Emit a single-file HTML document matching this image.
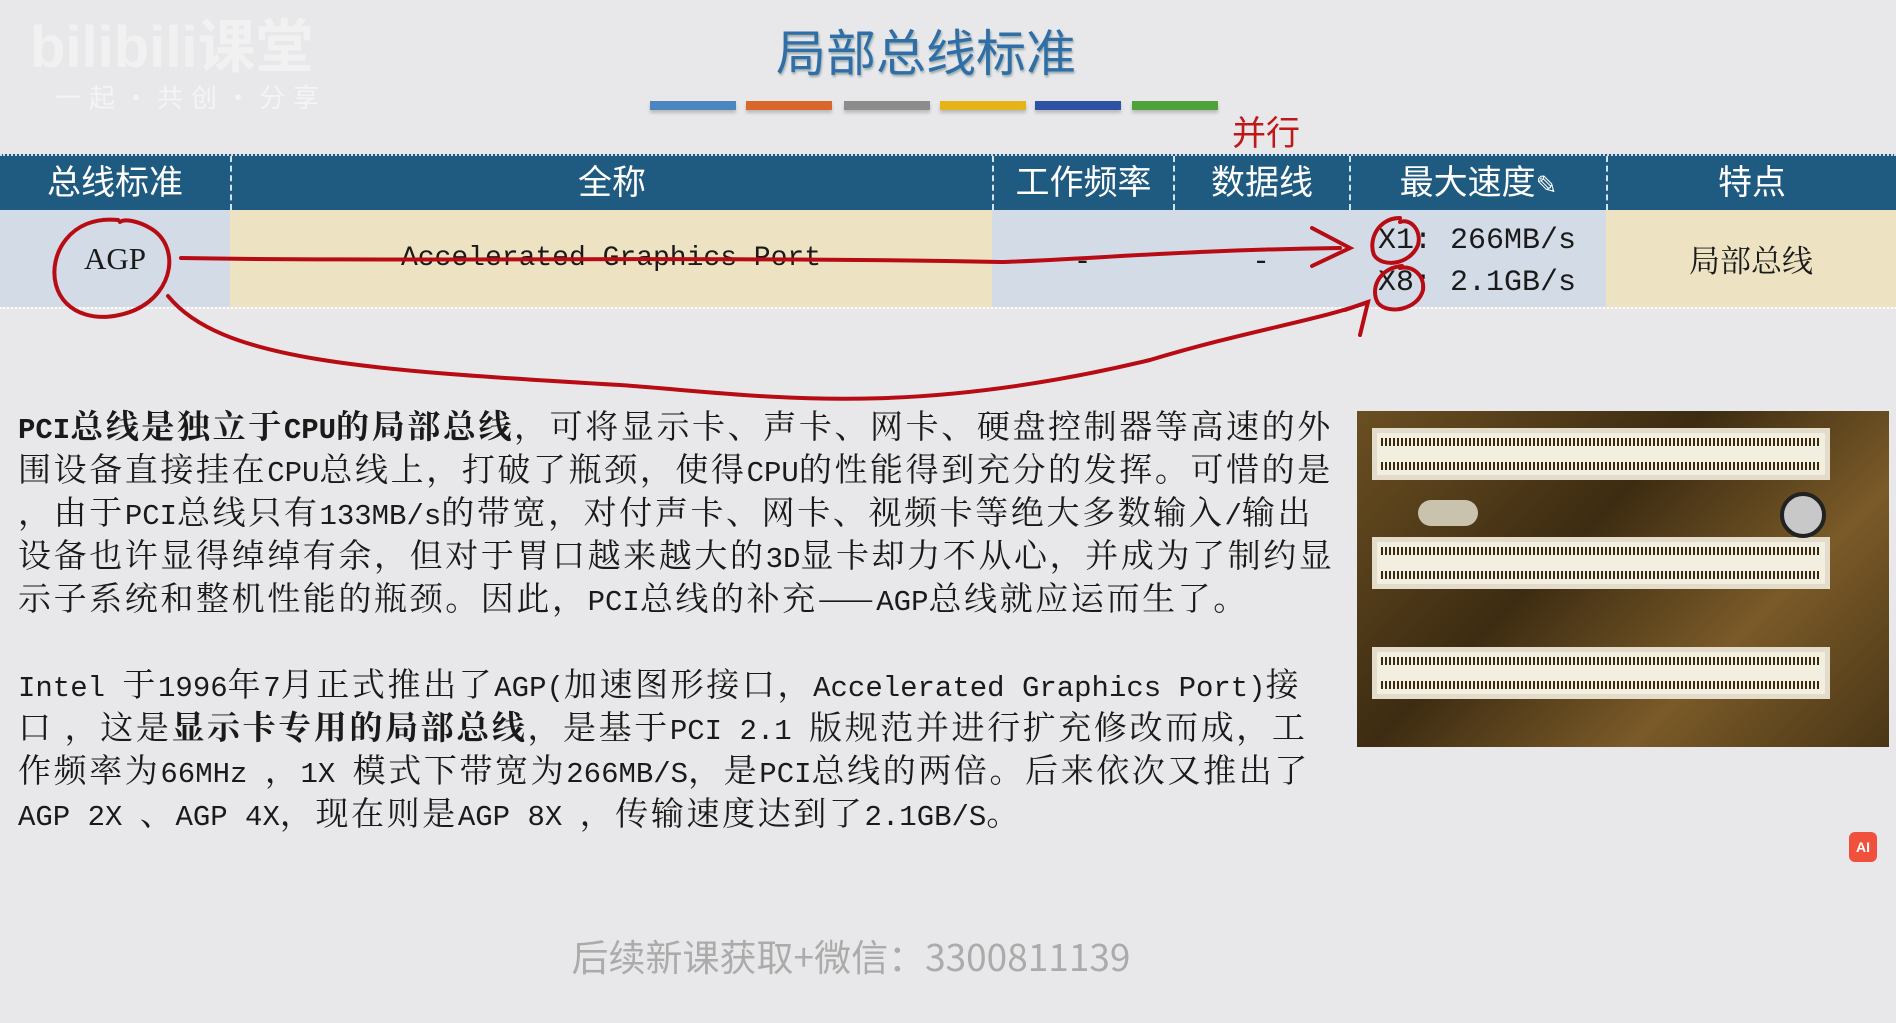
<!DOCTYPE html>
<html><head><meta charset="utf-8">
<style>
html,body{margin:0;padding:0}
body{width:1896px;height:1023px;overflow:hidden;background:#e8e8ea;position:relative;font-family:"Liberation Serif","Noto Serif CJK SC",serif;color:#1a1a1a}
.abs{position:absolute}
.title{left:0;width:1852px;top:14px;text-align:center;font-family:"Liberation Sans","Noto Sans CJK SC",sans-serif;font-size:50px;color:#2f6ea6;text-shadow:1px 2px 2px #9aa}
.bar{top:101px;height:9px;width:86px;box-shadow:0 3px 3px #bbb}
.hdr{left:0;top:154px;width:1896px;height:54px;background:#1f5a80;border-top:2px dotted #cde;border-bottom:2px dotted #cde}
.hc{position:absolute;top:0;height:54px;line-height:54px;text-align:center;color:#fff;font-family:"Liberation Sans","Noto Sans CJK SC",sans-serif;font-size:34px;border-left:2px dashed #cfe3f0;box-sizing:border-box}
.row{top:210px;height:97px}
.cell{position:absolute;top:210px;height:97px;line-height:97px;text-align:center;font-size:31px}
.p{left:18px;font-family:"Noto Serif CJK SC",serif;font-size:33px;white-space:nowrap;letter-spacing:2.6px}
.p div{height:43px;line-height:43px;overflow:visible}
.p b{font-weight:bold}
.p i{font-style:normal;font-family:"Liberation Mono",monospace;font-size:29px;letter-spacing:0;line-height:0}
.mono{font-family:"Liberation Mono","Noto Serif CJK SC",monospace}
.slot{position:absolute;left:1372px;width:458px;height:52px;background:#f2eee0;border:5px solid #e4dccb;box-sizing:border-box}
.slot:before,.slot:after{content:"";position:absolute;left:4px;right:4px;height:8px;background:repeating-linear-gradient(90deg,#3a2a10 0 2px,#f2eee0 2px 4px)}
.slot:before{top:5px}.slot:after{bottom:5px}
</style></head><body>
<div class="abs" style="left:30px;top:0;font-family:'Liberation Sans','Noto Sans CJK SC',sans-serif;font-size:58px;font-weight:bold;color:#f4f4f4;opacity:.8">bilibili课堂</div>
<div class="abs" style="left:55px;top:78px;font-family:'Noto Sans CJK SC',sans-serif;font-size:26px;color:#f4f4f4;letter-spacing:8px">一起·共创·分享</div>
<div class="abs title">局部总线标准</div>
<div class="abs bar" style="left:650px;background:#4b86c0"></div>
<div class="abs bar" style="left:746px;background:#d9662a"></div>
<div class="abs bar" style="left:844px;background:#8c8c8c"></div>
<div class="abs bar" style="left:940px;background:#e5b418"></div>
<div class="abs bar" style="left:1035px;background:#2d52a6"></div>
<div class="abs bar" style="left:1132px;background:#4ea23a"></div>
<div class="abs" style="left:1232px;top:106px;font-family:'Noto Sans CJK SC',sans-serif;font-size:34px;color:#c01818">并行</div>

<div class="abs hdr">
<div class="hc" style="left:0;width:230px;border-left:none">总线标准</div>
<div class="hc" style="left:230px;width:762px">全称</div>
<div class="hc" style="left:992px;width:181px">工作频率</div>
<div class="hc" style="left:1173px;width:176px">数据线</div>
<div class="hc" style="left:1349px;width:257px">最大速度<span style="font-size:26px">✎</span></div>
<div class="hc" style="left:1606px;width:290px">特点</div>
</div>
<div class="abs row" style="left:0;width:230px;background:#d3dbe7"></div>
<div class="abs row" style="left:230px;width:762px;background:#ede3c3"></div>
<div class="abs row" style="left:992px;width:614px;background:#d3dbe7"></div>
<div class="abs row" style="left:1606px;width:290px;background:#ede3c3"></div>
<div class="abs" style="left:0;top:307px;width:1896px;border-top:2px dotted #fff"></div>
<div class="cell" style="left:0;width:230px">AGP</div>
<div class="cell mono" style="left:230px;width:762px;font-size:28px">Accelerated Graphics Port</div>
<div class="cell" style="left:992px;width:181px">-</div>
<div class="cell" style="left:1173px;width:176px">-</div>
<div class="abs mono" style="left:1378px;top:220px;font-size:30px;line-height:42px;white-space:pre">X1: 266MB/s
X8: 2.1GB/s</div>
<div class="cell" style="left:1606px;width:290px;font-family:'Noto Serif CJK SC',serif">局部总线</div>

<div class="abs p" style="top:403px">
<div><b><i>PCI</i>总线是独立于<i>CPU</i>的局部总线</b>，可将显示卡、声卡、网卡、硬盘控制器等高速的外</div>
<div>围设备直接挂在<i>CPU</i>总线上，打破了瓶颈，使得<i>CPU</i>的性能得到充分的发挥。可惜的是</div>
<div>，由于<i>PCI</i>总线只有<i>133MB/s</i>的带宽，对付声卡、网卡、视频卡等绝大多数输入<i>/</i>输出</div>
<div>设备也许显得绰绰有余，但对于胃口越来越大的<i>3D</i>显卡却力不从心，并成为了制约显</div>
<div>示子系统和整机性能的瓶颈。因此，<i>PCI</i>总线的补充——<i>AGP</i>总线就应运而生了。</div>
</div>
<div class="abs p" style="top:661px">
<div><i>Intel </i>于<i>1996</i>年<i>7</i>月正式推出了<i>AGP(</i>加速图形接口，<i>Accelerated Graphics Port)</i>接</div>
<div>口 ，这是<b>显示卡专用的局部总线</b>，是基于<i>PCI 2.1 </i>版规范并进行扩充修改而成，工</div>
<div>作频率为<i>66MHz </i>，<i>1X </i>模式下带宽为<i>266MB/S</i>，是<i>PCI</i>总线的两倍。后来依次又推出了</div>
<div><i>AGP 2X </i>、<i>AGP 4X</i>，现在则是<i>AGP 8X </i>，传输速度达到了<i>2.1GB/S</i>。</div>
</div>

<div class="abs" style="left:1357px;top:411px;width:532px;height:336px;background:linear-gradient(135deg,#6b4f22,#3d2c12 40%,#7a5a28 70%,#4a3616)"></div>
<div class="slot" style="top:428px"></div>
<div class="slot" style="top:537px"></div>
<div class="slot" style="top:647px"></div>
<div class="abs" style="left:1418px;top:500px;width:60px;height:26px;border-radius:13px;background:#c9c2ad"></div>
<div class="abs" style="left:1780px;top:492px;width:38px;height:38px;border-radius:50%;background:#c8c8c8;border:4px solid #222"></div>

<div class="abs" style="left:1849px;top:832px;width:28px;height:30px;border-radius:6px;background:#f0503c;color:#fff;font:bold 14px 'Liberation Sans',sans-serif;text-align:center;line-height:30px">AI</div>
<div class="abs" style="left:0;width:1702px;top:928px;text-align:center;font-family:'Noto Sans CJK SC',sans-serif;font-size:37px;color:#ababab">后续新课获取+微信：3300811139</div>

<svg class="abs" style="left:0;top:0" width="1896" height="1023" fill="none" stroke="#b80c14" stroke-width="4" stroke-linecap="round">
<path d="M118,220 C70,215 48,255 56,285 C64,315 100,325 135,310 C175,292 180,245 150,228 C140,222 125,218 120,222"/>
<path d="M181,258 C400,262 700,256 1000,262 C1080,260 1180,250 1340,248"/>
<path d="M1312,228 L1350,248 L1312,266" />
<path d="M168,296 C220,360 360,370 620,385 C760,395 900,420 1150,360 C1250,330 1320,320 1368,302"/>
<path d="M1345,310 L1368,302 L1360,335"/>
<path d="M1400,218 C1378,218 1368,240 1374,255 C1382,268 1410,265 1418,245 C1422,230 1410,218 1400,222"/>
<path d="M1402,266 C1378,268 1370,290 1378,303 C1388,315 1418,310 1423,290 C1425,275 1412,265 1400,268"/>
</svg>
</body></html>
